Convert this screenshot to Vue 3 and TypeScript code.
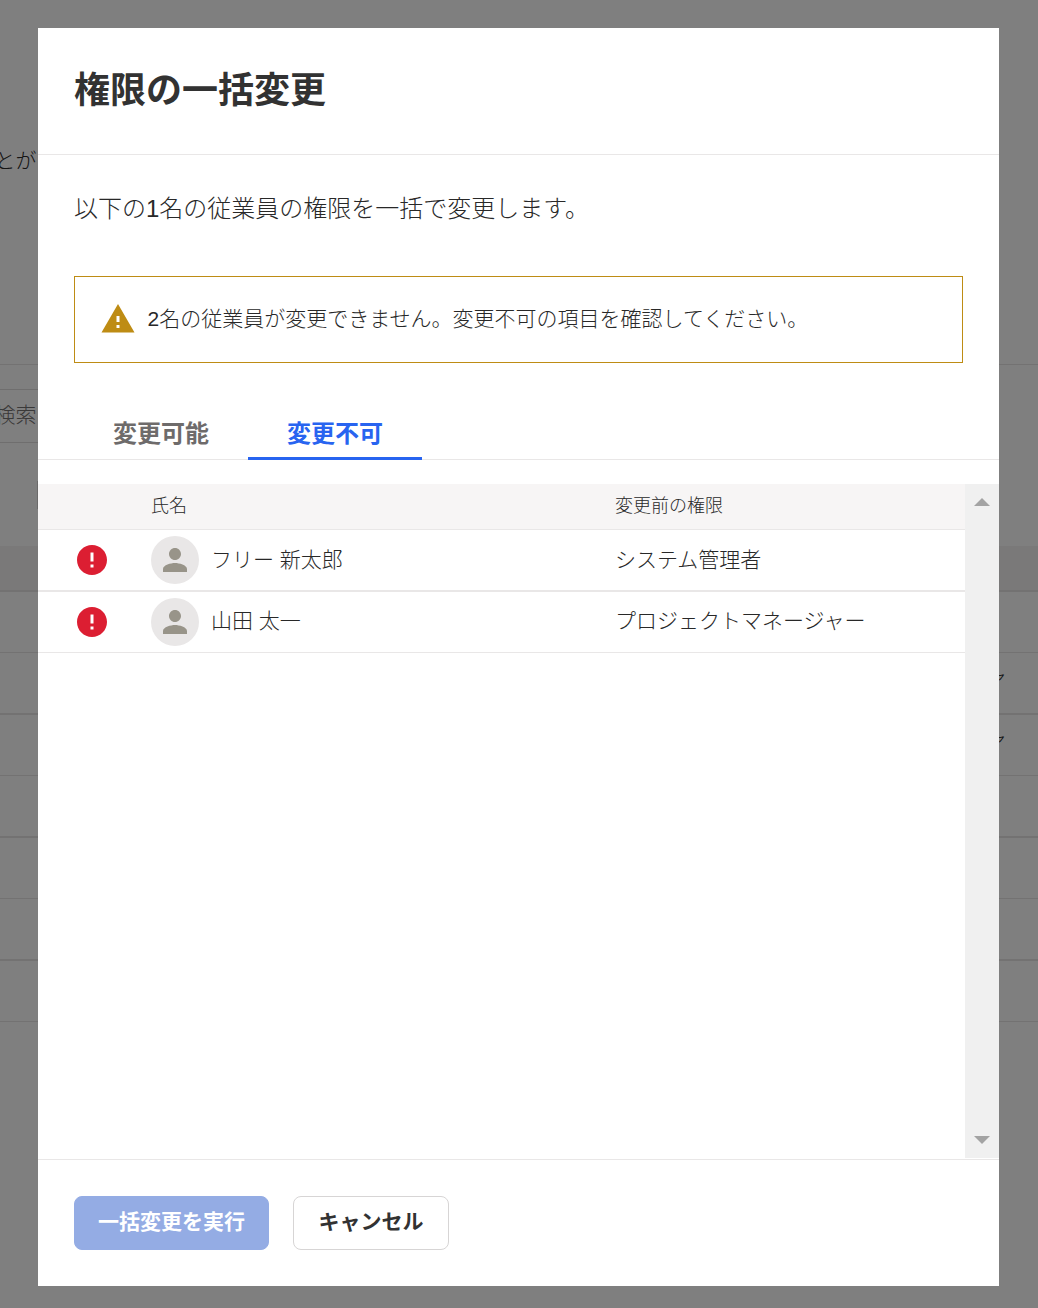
<script setup lang="ts">
interface Member {
  name: string
  role: string
}

interface Tab {
  id: string
  label: string
}

const tabs: Tab[] = [
  { id: 'editable', label: '変更可能' },
  { id: 'locked', label: '変更不可' },
]
const activeTab = 'locked'

const members: Member[] = [
  { name: 'フリー 新太郎', role: 'システム管理者' },
  { name: '山田 太一', role: 'プロジェクトマネージャー' },
]

const pageRows: string[] = ['', 'ャ', 'ャ', '', '', '', '']
</script>

<template>
  <div class="screen">
    <div class="page" aria-hidden="true">
      <div class="page-intro"><span>とが</span></div>
      <div class="page-gap"></div>
      <div class="page-search"><span>検索</span></div>
      <div class="page-actions"><i class="page-button"></i></div>
      <div class="page-head"></div>
      <div v-for="(text, i) in pageRows" :key="i" class="page-row">{{ text }}</div>
    </div>

    <div class="overlay">
      <section class="dialog" role="dialog">
        <header class="dialog-header">
          <h1>権限の一括変更</h1>
        </header>

        <div class="dialog-body">
          <p class="lead">以下の<span class="num">1</span>名の従業員の権限を一括で変更します。</p>

          <div class="alert">
            <svg class="icon" viewBox="0 0 24 24" fill="#be8c14">
              <path d="M1 21h22L12 2 1 21zm12-3h-2v-2h2v2zm0-4h-2v-4h2v4z" />
            </svg>
            <span><span class="num">2</span>名の従業員が変更できません。変更不可の項目を確認してください。</span>
          </div>

          <nav class="tabs">
            <button
              v-for="tab in tabs"
              :key="tab.id"
              class="tab"
              :class="{ active: tab.id === activeTab }"
            >{{ tab.label }}</button>
          </nav>

          <div class="list">
            <div class="table">
              <div class="row head">
                <div class="cell status"></div>
                <div class="cell name">氏名</div>
                <div class="cell role">変更前の権限</div>
              </div>
              <div v-for="member in members" :key="member.name" class="row member">
                <div class="cell status">
                  <svg class="icon" viewBox="0 0 24 24" fill="#dc1e32">
                    <path d="M12 2C6.48 2 2 6.48 2 12s4.48 10 10 10 10-4.48 10-10S17.52 2 12 2zm1 15h-2v-2h2v2zm0-4h-2V7h2v6z" />
                  </svg>
                </div>
                <div class="cell name">
                  <span class="avatar">
                    <svg class="icon" viewBox="0 0 24 24" fill="#989489">
                      <path d="M12 12c2.21 0 4-1.79 4-4s-1.79-4-4-4-4 1.79-4 4 1.79 4 4 4zm0 2c-2.67 0-8 1.34-8 4v2h16v-2c0-2.66-5.33-4-8-4z" />
                    </svg>
                  </span>
                  <span class="label">{{ member.name }}</span>
                </div>
                <div class="cell role"><span class="label">{{ member.role }}</span></div>
              </div>
            </div>
            <div class="scrollbar">
              <svg width="16" height="8" viewBox="0 0 16 8" fill="#a3a3a3"><path d="M0 8L8 0l8 8z" /></svg>
              <svg width="16" height="8" viewBox="0 0 16 8" fill="#a3a3a3"><path d="M0 0h16L8 8z" /></svg>
            </div>
          </div>
        </div>

        <footer class="dialog-footer">
          <button class="button primary" disabled>一括変更を実行</button>
          <button class="button">キャンセル</button>
        </footer>
      </section>
    </div>
  </div>
</template>

<style>
body {
  margin: 0;
  overflow: hidden;
}
</style>

<style scoped>
.screen,
.screen * {
  box-sizing: border-box;
}

.screen {
  position: relative;
  width: 1038px;
  height: 1308px;
  overflow: hidden;
  background: #fff;
  color: #282828;
  font-family: 'Liberation Sans', 'Noto Sans CJK JP', sans-serif;
  font-size: 21px;
  font-weight: 300;
  line-height: 30px;
}

.num {
  font-weight: 400;
}

.page-intro {
  height: 365px;
  padding-top: 146px;
  border-bottom: 1px solid #e6e4e4;
}

.page-intro span,
.page-search span {
  display: block;
  margin-left: -5.5px;
}

.page-gap {
  height: 24px;
}

.page-search {
  width: 300px;
  height: 54px;
  padding-top: 10px;
  border: solid #dedcdc;
  border-width: 1px 0;
  color: #757272;
}

.page-actions {
  height: 103px;
  padding: 38px 0 0 37px;
}

.page-button {
  display: block;
  width: 100px;
  height: 28px;
  border-left: 1px solid #d7d5d5;
}

.page-head {
  height: 46px;
  background: #f4f2f2;
  border-bottom: 2px solid #e6e4e4;
}

.page-row {
  height: 61px;
  padding: 9px 0 0 986px;
  border-bottom: 1px solid #e6e4e4;
}

.page-row:nth-child(odd) {
  height: 62px;
  border-bottom-width: 2px;
}

.overlay {
  position: absolute;
  inset: 0;
  padding: 28px 39px 22px 38px;
  background: rgba(0, 0, 0, 0.5);
}

.dialog {
  display: flex;
  flex-direction: column;
  height: 1258px;
  background: #fff;
}

.dialog-header {
  height: 127px;
  padding: 36px 36px 0;
  border-bottom: 1px solid #e9e7e7;
}

h1 {
  margin: 0;
  color: #323232;
  font-size: 36px;
  font-weight: 700;
  line-height: 54px;
}

.dialog-body {
  display: flex;
  flex: 1;
  flex-direction: column;
  min-height: 0;
  padding-bottom: 1px;
}

.lead {
  margin: 36px 36px 49px;
  font-size: 24px;
  line-height: 36px;
}

.alert {
  display: flex;
  align-items: center;
  gap: 11.5px;
  height: 87px;
  margin: 0 36px;
  padding: 0 25px 2px;
  border: 1px solid #be8c14;
}

.icon {
  display: block;
  flex: none;
  width: 36px;
  height: 36px;
}

.tabs {
  display: flex;
  height: 97px;
  padding: 45px 36px 0;
  border-bottom: 1px solid #e9e7e7;
}

.tab {
  width: 174px;
  height: 52px;
  padding: 2px 0 0;
  border: 0;
  border-bottom: 3px solid transparent;
  background: none;
  color: #6e6b6b;
  font: inherit;
  font-size: 24px;
  font-weight: 700;
}

.tab.active {
  border-color: #2864f0;
  color: #2864f0;
}

.list {
  display: flex;
  flex: 1;
  margin-top: 24px;
}

.table {
  flex: 1;
}

.row {
  display: flex;
  height: 61px;
  border-bottom: 1px solid #e9e7e7;
}

.row.member:nth-child(2) {
  height: 62px;
  border-bottom-width: 2px;
}

.row.member:last-child .label {
  padding-bottom: 2px;
}

.row.head {
  height: 46px;
  padding-bottom: 2px;
  background: #f7f5f5;
  font-size: 18px;
}

.cell {
  display: flex;
  align-items: center;
}

.cell.status {
  width: 113px;
  padding-left: 36px;
}

.cell.name {
  gap: 12px;
  width: 464px;
}

.avatar {
  display: grid;
  place-items: center;
  width: 48px;
  height: 48px;
  border-radius: 50%;
  background: #e9e7e7;
}

.scrollbar {
  display: flex;
  flex-direction: column;
  align-items: center;
  justify-content: space-between;
  width: 34px;
  padding: 14px 0;
  background: #f0f0f0;
}

.dialog-footer {
  display: flex;
  gap: 24px;
  height: 127px;
  padding: 36px;
  border-top: 1px solid #e9e7e7;
}

.button {
  width: 156px;
  height: 54px;
  padding: 0 0 2px;
  border: 1px solid #d7d5d5;
  border-radius: 8px;
  background: #fff;
  color: #323232;
  font: inherit;
  font-weight: 700;
}

.button.primary {
  width: 195px;
  border-color: #94ace4;
  background: #94ace4;
  color: #fff;
}
</style>
